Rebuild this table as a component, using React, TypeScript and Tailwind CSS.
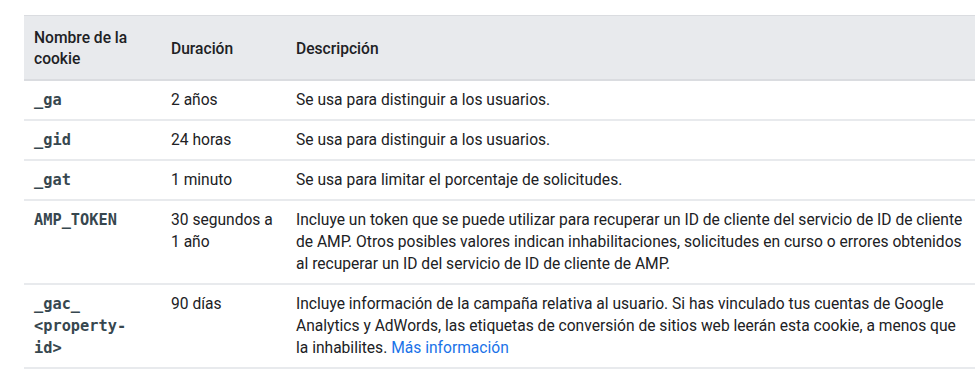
import React from "react";

type CookieRow = {
  name: React.ReactNode;
  duration: React.ReactNode;
  description: React.ReactNode;
};

const rows: CookieRow[] = [
  {
    name: "_ga",
    duration: "2 años",
    description: "Se usa para distinguir a los usuarios.",
  },
  {
    name: "_gid",
    duration: "24 horas",
    description: "Se usa para distinguir a los usuarios.",
  },
  {
    name: "_gat",
    duration: "1 minuto",
    description: "Se usa para limitar el porcentaje de solicitudes.",
  },
  {
    name: "AMP_TOKEN",
    duration: "30 segundos a 1 año",
    description:
      "Incluye un token que se puede utilizar para recuperar un ID de cliente del servicio de ID de cliente de AMP. Otros posibles valores indican inhabilitaciones, solicitudes en curso o errores obtenidos al recuperar un ID del servicio de ID de cliente de AMP.",
  },
  {
    name: "_gac_ <property-id>",
    duration: "90 días",
    description: (
      <>
        Incluye información de la campaña relativa al usuario. Si has vinculado
        tus cuentas de Google Analytics y AdWords, las etiquetas de conversión
        de sitios web leerán esta cookie, a menos que la inhabilites.{" "}
        <a className="text-[#1a73e8]" href="#">
          Más información
        </a>
      </>
    ),
  },
];

export default function App() {
  return (
    <div className="h-[392px] w-[975px] overflow-hidden bg-white pt-[15px] pl-[24px] font-['Roboto',sans-serif] text-[15.6px] leading-[22px] text-[#202124]">
      <table className="w-[951px] table-fixed border-collapse text-left">
        <colgroup>
          <col className="w-[137px]" />
          <col className="w-[125px]" />
          <col />
        </colgroup>
        <thead>
          <tr className="border-t border-b-2 border-t-[#dadce0] border-b-[#dadce0] bg-[#e8eaed]">
            <th className="px-[10px] pt-[12px] pb-[9px] align-middle leading-[21px] font-medium">
              Nombre de la cookie
            </th>
            <th className="px-[10px] pt-[12px] pb-[9px] align-middle leading-[21px] font-medium">
              Duración
            </th>
            <th className="pt-[12px] pr-[9px] pb-[9px] pl-[10px] align-middle leading-[21px] font-medium">
              Descripción
            </th>
          </tr>
        </thead>
        <tbody>
          {rows.map((row, index) => (
            <tr className="border-b-2 border-[#e8eaed]" key={index}>
              <td className="px-[10px] py-[8px] align-top font-['DejaVu_Sans_Mono',monospace] text-[15.3px] leading-[22px] font-bold text-[#37474f]">
                {row.name}
              </td>
              <td className="px-[10px] py-[8px] align-top">{row.duration}</td>
              <td className="py-[8px] pr-[9px] pl-[10px] align-top">
                {row.description}
              </td>
            </tr>
          ))}
        </tbody>
      </table>
    </div>
  );
}
